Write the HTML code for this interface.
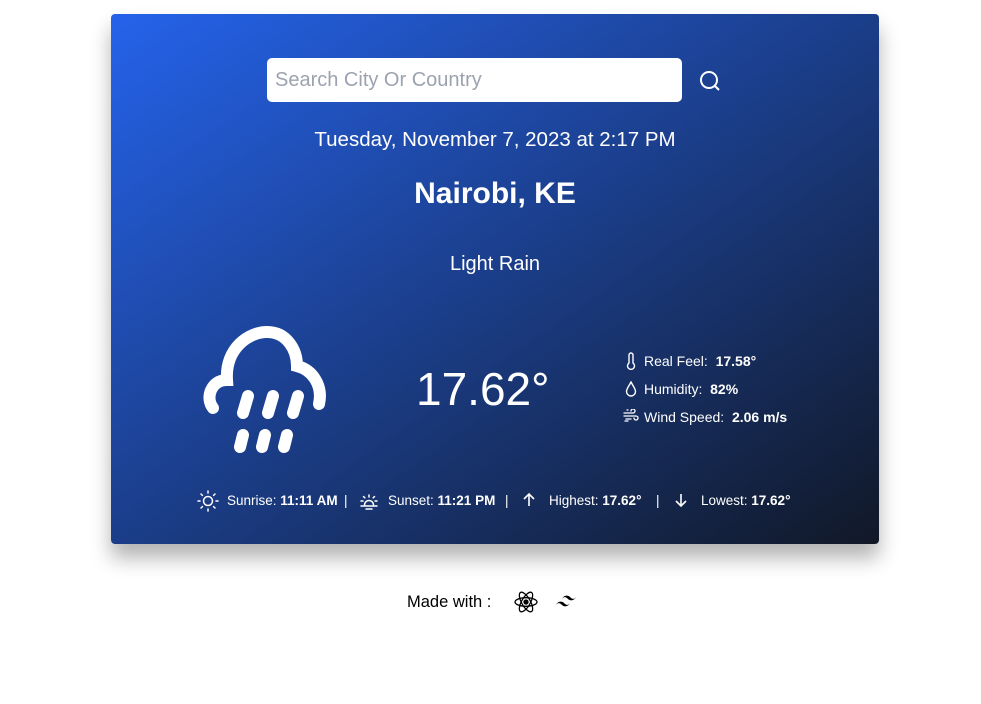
<!DOCTYPE html>
<html><head><style>
body{margin:0;width:981px;height:704px;background:#fff;font-family:"Liberation Sans",sans-serif;position:relative;overflow:hidden}
.card{position:absolute;left:111px;top:14px;width:768px;height:530px;border-radius:4px;background:linear-gradient(to bottom right,#2563eb,#111827);box-shadow:0 14px 20px rgba(0,0,0,.3);color:#fff}
.abs{position:absolute;white-space:nowrap}
.search{left:156px;top:44px;width:415px;height:44px;background:#fff;border-radius:5px;color:#9ca3af;font-size:20px;line-height:44px;padding-left:8px;box-sizing:border-box}
b{font-weight:bold}
.sm{font-size:14px}
.b{top:479px;font-size:13.5px}
</style></head><body>
<div class="card">
<div class="abs search">Search City Or Country</div>
<svg class="abs" style="left:587px;top:55px" width="24" height="24" viewBox="0 0 24 24" fill="none" stroke="#fff" stroke-width="2"><circle cx="11" cy="11" r="8"/><path d="M17 17l4 4"/></svg>
<div class="abs" style="left:0;width:768px;text-align:center;top:114px;font-size:20.5px;font-weight:300">Tuesday, November 7, 2023 at 2:17 PM</div>
<div class="abs" style="left:0;width:768px;text-align:center;top:163px;font-size:30px;font-weight:bold">Nairobi, KE</div>
<div class="abs" style="left:0;width:768px;text-align:center;top:239px;font-size:20px">Light Rain</div>
<svg class="abs" style="left:92px;top:312px" width="130" height="140" viewBox="0 0 130 140" fill="none" stroke="#fff" stroke-width="12" stroke-linecap="round"><path d="M10 82 C2 72 8 54 24 54 C22 22 46 6 64 6 C84 6 94 24 94 40 C110 44 120 60 116 78"/><path d="M45 70 l-5 17 M70 70 l-5 17 M95 70 l-5 17 M40 109 l-3 12 M62 109 l-3 12 M84 109 l-3 12"/></svg>
<div class="abs" style="left:305px;top:348px;font-size:46px;font-weight:300">17.62°</div>
<svg class="abs" style="left:514px;top:338px" width="12" height="18" viewBox="0 0 12 18" fill="none" stroke="#fff" stroke-width="1.4"><path d="M4 3a2 2 0 014 0v8a3.5 3.5 0 11-4 0z"/></svg>
<svg class="abs" style="left:514px;top:367px" width="12" height="16" viewBox="0 0 12 16" fill="none" stroke="#fff" stroke-width="1.4"><path d="M6 1C4 5 1.5 8 1.5 10.5a4.5 4.5 0 009 0C10.5 8 8 5 6 1z"/></svg>
<svg class="abs" style="left:512px;top:395px" width="16" height="14" viewBox="0 0 16 14" fill="none" stroke="#fff" stroke-width="1.3" stroke-linecap="round"><path d="M1 4h9a2 2 0 10-2-2M1 7h12a2 2 0 11-2 2M3 10h5M4 1h1M2 12h3"/></svg>
<div class="abs sm" style="left:533px;top:339px">Real Feel:&nbsp; <b>17.58°</b></div>
<div class="abs sm" style="left:533px;top:367px">Humidity:&nbsp; <b>82%</b></div>
<div class="abs sm" style="left:533px;top:395px">Wind Speed:&nbsp; <b>2.06 m/s</b></div>
<svg class="abs" style="left:86px;top:476px" width="22" height="22" viewBox="0 0 22 22" fill="none" stroke="#fff" stroke-width="1.5" stroke-linecap="round"><circle cx="11" cy="11" r="4.5"/><path d="M11 1v2M11 19v2M1 11h2M19 11h2M4 4l1.4 1.4M16.6 16.6L18 18M4 18l1.4-1.4M16.6 5.4L18 4"/></svg>
<div class="abs b" style="left:116px">Sunrise: <b>11:11 AM</b></div>
<div class="abs b" style="left:233px">|</div>
<svg class="abs" style="left:247px;top:476px" width="22" height="22" viewBox="0 0 22 22" fill="none" stroke="#fff" stroke-width="1.5" stroke-linecap="round"><path d="M6.5 15a4.5 4.5 0 019 0M3 16h16M11 5v2M3 11h2M17 11h2M5.5 6.5l1.3 1.3M16.5 6.5l-1.3 1.3M8 19h6"/></svg>
<div class="abs b" style="left:277px">Sunset: <b>11:21 PM</b></div>
<div class="abs b" style="left:394px">|</div>
<svg class="abs" style="left:411px;top:479px" width="14" height="14" viewBox="0 0 14 14" fill="none" stroke="#fff" stroke-width="1.6"><path d="M7 13V1M2 6l5-5 5 5"/></svg>
<div class="abs b" style="left:438px">Highest: <b>17.62°</b></div>
<div class="abs b" style="left:545px">|</div>
<svg class="abs" style="left:563px;top:479px" width="14" height="14" viewBox="0 0 14 14" fill="none" stroke="#fff" stroke-width="1.6"><path d="M7 1v12M2 8l5 5 5-5"/></svg>
<div class="abs b" style="left:590px">Lowest: <b>17.62°</b></div>
</div>
<div class="abs" style="left:407px;top:593px;font-size:16.5px">Made with :</div>
<svg class="abs" style="left:513px;top:589px" width="26" height="26" viewBox="-13 -13 26 26" fill="none" stroke="#000" stroke-width="1.3"><ellipse rx="11" ry="4.3"/><ellipse rx="11" ry="4.3" transform="rotate(60)"/><ellipse rx="11" ry="4.3" transform="rotate(120)"/><circle r="2" fill="#000"/></svg>
<svg class="abs" style="left:555px;top:594px" width="26" height="16" viewBox="0 0 26 16" fill="#000"><path d="M7 5c2-4 6-4 8-2 2 2 4 3 6 0-2 4-6 4-8 2-2-2-4-3-6 0zM1 11c2-4 6-4 8-2 2 2 4 3 6 0-2 4-6 4-8 2-2-2-4-3-6 0z"/></svg>
</body></html>
